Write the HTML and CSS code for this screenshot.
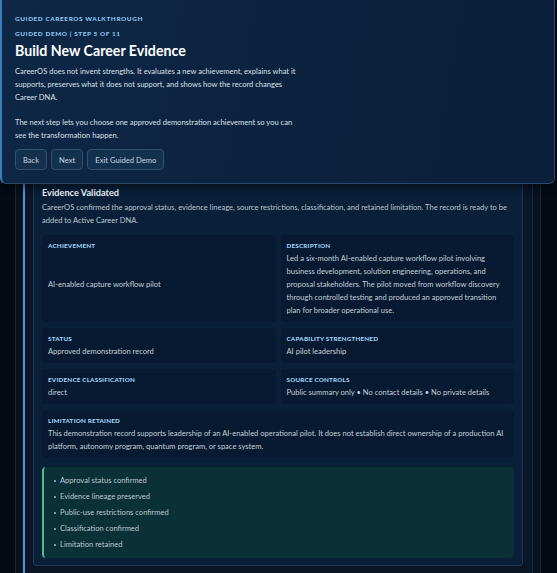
FILE: index.html
```html
<!DOCTYPE html>
<html lang="en">
<head>
    <meta charset="UTF-8">
    <meta name="viewport" content="width=device-width, initial-scale=1.0">
    <title>Guided CareerOS Walkthrough</title>
    <link rel="stylesheet" href="styles.css">
</head>
<body>
    <!-- page behind the guide -->
    <div class="shell">
        <div class="track">
            <div class="card">
                <!-- earlier steps sit under the guide panel -->
                <div class="spacer"></div>

                <h3 class="card-title">Evidence Validated</h3>
                <p class="card-text">CareerOS confirmed the approval status, evidence lineage, source restrictions, classification, and retained limitation. The record is ready to be added to Active Career DNA.</p>

                <div class="fields">
                    <div class="field">
                        <div class="field-label">Achievement</div>
                        <div class="field-value centered">AI-enabled capture workflow pilot</div>
                    </div>
                    <div class="field">
                        <div class="field-label">Description</div>
                        <div class="field-value">Led a six-month AI-enabled capture workflow pilot involving business development, solution engineering, operations, and proposal stakeholders. The pilot moved from workflow discovery through controlled testing and produced an approved transition plan for broader operational use.</div>
                    </div>
                    <div class="field">
                        <div class="field-label">Status</div>
                        <div class="field-value">Approved demonstration record</div>
                    </div>
                    <div class="field">
                        <div class="field-label">Capability Strengthened</div>
                        <div class="field-value">AI pilot leadership</div>
                    </div>
                    <div class="field">
                        <div class="field-label">Evidence Classification</div>
                        <div class="field-value">direct</div>
                    </div>
                    <div class="field">
                        <div class="field-label">Source Controls</div>
                        <div class="field-value">Public summary only • No contact details • No private details</div>
                    </div>
                    <div class="field wide">
                        <div class="field-label">Limitation Retained</div>
                        <div class="field-value">This demonstration record supports leadership of an AI-enabled operational pilot. It does not establish direct ownership of a production AI platform, autonomy program, quantum program, or space system.</div>
                    </div>
                </div>

                <ul class="checks">
                    <li>Approval status confirmed</li>
                    <li>Evidence lineage preserved</li>
                    <li>Public-use restrictions confirmed</li>
                    <li>Classification confirmed</li>
                    <li>Limitation retained</li>
                </ul>
            </div>
        </div>
    </div>
    <div class="bottom-bar"></div>

    <!-- guided demo panel -->
    <div class="guide">
        <div class="eyebrow">Guided CareerOS Walkthrough</div>
        <div class="eyebrow">Guided Demo | Step 5 of 11</div>
        <h2>Build New Career Evidence</h2>
        <p>CareerOS does not invent strengths. It evaluates a new achievement, explains what it supports, preserves what it does not support, and shows how the record changes Career DNA.</p>
        <p>The next step lets you choose one approved demonstration achievement so you can see the transformation happen.</p>
        <div class="guide-buttons">
            <button>Back</button>
            <button>Next</button>
            <button>Exit Guided Demo</button>
        </div>
    </div>
</body>
</html>
```

FILE: styles.css
```css
body {
    margin: 0;
    background-color: #050b15;
    font-family: Lato, "Open Sans", sans-serif;
    color: #c3cfdb;
}
.shell {
    margin-left: 15px;
    width: 526px;
    box-sizing: border-box;
    border-left: 1px solid #17283b;
    border-right: 1px solid #17283b;
    background-color: #08111e;
    padding: 0 7px 0 7px;
}
.track {
    border-left: 2px solid #4a98e4;
    border-right: 1px solid #172a40;
    background-color: #0a1526;
    padding: 0 9px 7px 8px;
}
.card {
    border: 1px solid #1d3856;
    border-top: none;
    border-radius: 0 0 4px 4px;
    background-color: #0a1f38;
    padding: 8px 8px 7px 8px;
}
.spacer {
    height: 178px;
}
.card-title {
    margin: 0;
    font-size: 9.2px;
    line-height: 13px;
    font-weight: 700;
    color: #eef3f8;
}
.card-text {
    margin: 2px 0 8px 0;
    font-size: 7.55px;
    line-height: 13px;
    color: #b9c6d3;
}
.fields {
    display: grid;
    grid-template-columns: 1fr 1fr;
    gap: 6px 5px;
}
.field {
    display: flex;
    flex-direction: column;
    background-color: #081a31;
    border-radius: 4px;
    padding: 6px 6px 5px 6px;
}
.field.wide {
    grid-column: 1 / 3;
}
.field-label {
    font-size: 6.3px;
    line-height: 9px;
    font-weight: 900;
    letter-spacing: 0.2px;
    text-transform: uppercase;
    color: #9fcff3;
    margin-bottom: 2px;
}
.field-value {
    font-size: 7.55px;
    line-height: 13px;
    color: #c3cfdb;
}
.field-value.centered {
    flex: 1;
    display: flex;
    align-items: center;
}
.checks {
    list-style: none;
    margin: 9px 0 0 0;
    padding: 6px 0 5px 16px;
    background-color: #0c3037;
    border-left: 2px solid #43c194;
    border-radius: 4px;
}
.checks li {
    position: relative;
    font-size: 7.55px;
    line-height: 16px;
    color: #b9c9d3;
}
.checks li::before {
    content: "";
    position: absolute;
    left: -6px;
    top: 7px;
    width: 2px;
    height: 2px;
    border-radius: 50%;
    background-color: #9fbcc8;
}
.bottom-bar {
    height: 2px;
    background-color: #5a6979;
}
.guide {
    position: absolute;
    top: 0;
    left: 0;
    width: 555px;
    height: 184px;
    box-sizing: border-box;
    padding: 14px 14px 0 13px;
    background: linear-gradient(100deg, #0d2745, #0a1f39);
    border: 1px solid #2b4a6b;
    border-top: none;
    border-left: 2px solid #3a7cc0;
    border-radius: 0 0 6px 6px;
    box-shadow: 0 3px 8px rgba(0, 0, 0, 0.55);
}
.eyebrow {
    font-size: 6.4px;
    line-height: 9px;
    font-weight: 900;
    letter-spacing: 0.6px;
    text-transform: uppercase;
    color: #8cc4ef;
    margin-bottom: 5.7px;
}
.guide h2 {
    margin: -1.8px 0 5.5px 0;
    font-size: 14.2px;
    line-height: 18px;
    font-weight: 700;
    color: #ffffff;
}
.guide p {
    margin: 0 0 11.6px 0;
    width: 290px;
    font-size: 7.55px;
    line-height: 13px;
    color: #d8e0ea;
}
.guide-buttons {
    display: flex;
    gap: 4px;
    margin-top: -4px;
}
.guide-buttons button {
    height: 21px;
    padding: 0 7px;
    font-family: Lato, "Open Sans", sans-serif;
    font-size: 7.6px;
    color: #c8d4e0;
    background-color: #13304d;
    border: 1px solid #34506e;
    border-radius: 4px;
}
```
